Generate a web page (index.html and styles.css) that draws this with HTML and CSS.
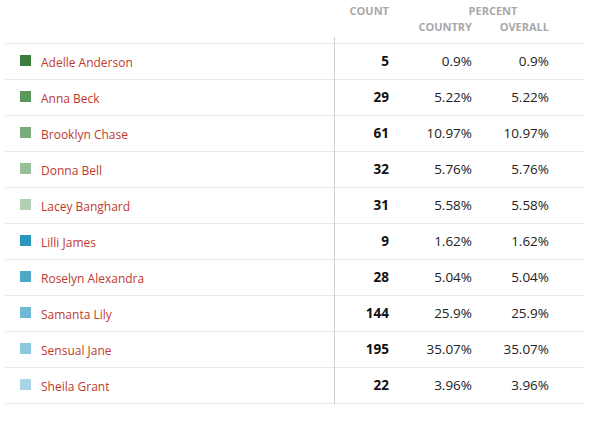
FILE: index.html
```html
<!DOCTYPE html>
<html>
<head>
<meta charset="utf-8">
<link rel="stylesheet" href="styles.css">
</head>
<body>
<table class="stats">
  <colgroup>
    <col class="col-name">
    <col class="col-count">
    <col class="col-country">
    <col class="col-overall">
    <col class="col-rest">
  </colgroup>
  <thead>
    <tr class="h1">
      <th></th>
      <th class="count">COUNT</th>
      <th class="pct-group" colspan="2">PERCENT</th>
      <th></th>
    </tr>
    <tr class="h2">
      <th></th>
      <th></th>
      <th>COUNTRY</th>
      <th>OVERALL</th>
      <th></th>
    </tr>
    <tr class="h3">
      <th></th>
      <th class="count"></th>
      <th></th>
      <th></th>
      <th></th>
    </tr>
  </thead>
  <tbody>
    <tr><td class="name"><span class="sw c1"></span><span class="lbl">Adelle Anderson</span></td><td class="count">5</td><td>0.9%</td><td>0.9%</td><td></td></tr>
    <tr><td class="name"><span class="sw c2"></span><span class="lbl">Anna Beck</span></td><td class="count">29</td><td>5.22%</td><td>5.22%</td><td></td></tr>
    <tr><td class="name"><span class="sw c3"></span><span class="lbl">Brooklyn Chase</span></td><td class="count">61</td><td>10.97%</td><td>10.97%</td><td></td></tr>
    <tr><td class="name"><span class="sw c4"></span><span class="lbl">Donna Bell</span></td><td class="count">32</td><td>5.76%</td><td>5.76%</td><td></td></tr>
    <tr><td class="name"><span class="sw c5"></span><span class="lbl">Lacey Banghard</span></td><td class="count">31</td><td>5.58%</td><td>5.58%</td><td></td></tr>
    <tr><td class="name"><span class="sw c6"></span><span class="lbl">Lilli James</span></td><td class="count">9</td><td>1.62%</td><td>1.62%</td><td></td></tr>
    <tr><td class="name"><span class="sw c7"></span><span class="lbl">Roselyn Alexandra</span></td><td class="count">28</td><td>5.04%</td><td>5.04%</td><td></td></tr>
    <tr><td class="name"><span class="sw c8"></span><span class="lbl">Samanta Lily</span></td><td class="count">144</td><td>25.9%</td><td>25.9%</td><td></td></tr>
    <tr><td class="name"><span class="sw c9"></span><span class="lbl">Sensual Jane</span></td><td class="count">195</td><td>35.07%</td><td>35.07%</td><td></td></tr>
    <tr><td class="name"><span class="sw c10"></span><span class="lbl">Sheila Grant</span></td><td class="count">22</td><td>3.96%</td><td>3.96%</td><td></td></tr>
  </tbody>
</table>
</body>
</html>
```
FILE: styles.css
```css
html, body {
  margin: 0;
  padding: 0;
  background: #fff;
}
body {
  padding: 3px 5px 0 5px;
  font-family: "Open Sans", "Liberation Sans", sans-serif;
}
.stats {
  width: 580px;
  border-collapse: collapse;
  table-layout: fixed;
}
.col-name { width: 329px; }
.col-count { width: 55px; }
.col-country { width: 83px; }
.col-overall { width: 77px; }
.col-rest { width: 36px; }
.stats th, .stats td {
  padding: 0;
}

thead th {
  font-size: 11px;
  font-weight: 700;
  color: #a8a8a8;
  line-height: 15px;
  text-align: right;
  vertical-align: top;
}
.h1 th { height: 16px; }
.h2 th { height: 18px; }
.h3 th { height: 6px; }
.h1 .pct-group { text-align: center; padding-left: 48px; }
.h3 .count { border-left: 1px solid #cfcfcf; }

tbody tr { border-top: 1px solid #e8e8e8; }
tbody tr:last-child { border-bottom: 1px solid #e8e8e8; }
tbody td {
  height: 34px;
  padding-bottom: 1px;
  font-size: 13.5px;
  color: #222;
  text-align: right;
  vertical-align: middle;
}
.stats tbody td { padding: 0 0 1px 0; }
tbody td.count {
  border-left: 1px solid #cfcfcf;
  font-weight: 700;
  color: #111;
}
.stats tbody td.name {
  text-align: left;
  padding-left: 15px;
}
.name .sw {
  display: inline-block;
  width: 11px;
  height: 11px;
  vertical-align: middle;
  margin-right: 10px;
  position: relative;
  top: -1px;
}
.lbl {
  font-size: 12px;
  color: #c0392f;
  vertical-align: middle;
}
.c1 { background: #3a7d3f; }
.c2 { background: #5b985d; }
.c3 { background: #7aab7c; }
.c4 { background: #97bf98; }
.c5 { background: #b2d1b3; }
.c6 { background: #2a97bb; }
.c7 { background: #4ea8c8; }
.c8 { background: #6ebad4; }
.c9 { background: #8ac8dc; }
.c10 { background: #a8d6e4; }
```
